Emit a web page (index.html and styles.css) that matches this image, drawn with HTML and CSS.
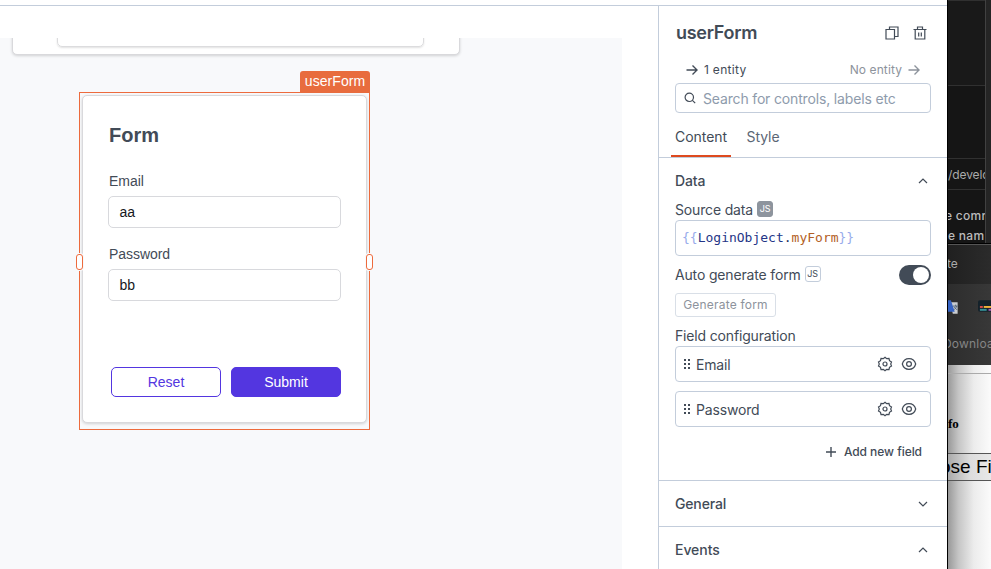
FILE: index.html
```html
<!DOCTYPE html>
<html lang="en">
<head>
<meta charset="utf-8">
<title>userForm</title>
<link rel="stylesheet" href="styles.css">
</head>
<body>
<svg class="defs" width="0" height="0">
  <symbol id="gear" viewBox="0 0 16 16"><path d="M8 1.200l1.700 1.500 2.300-.2.500 2.200 2 1.200L13.700 8l.8 2.100-2 1.200-.5 2.200-2.300-.2L8 14.800l-1.700-1.500-2.300.2-.5-2.200-2-1.200L2.300 8l-.8-2.100 2-1.200.5-2.200 2.300.2z"/><circle cx="8" cy="8" r="2"/></symbol>
  <symbol id="eye" viewBox="0 0 16 16"><path d="M1.300 8C2.200 4.800 4.900 2.700 8 2.700s5.800 2.100 6.700 5.300c-.9 3.200-3.600 5.300-6.700 5.300S2.200 11.200 1.300 8z"/><circle cx="8" cy="8" r="2.400"/></symbol>
  <symbol id="dots" viewBox="0 0 8 12"><path d="M1 1h2v2H1zM5 1h2v2H5zM1 5h2v2H1zM5 5h2v2H5zM1 9h2v2H1zM5 9h2v2H5z"/></symbol>
  <symbol id="arrow" viewBox="0 0 12 12"><path d="M.5 6h10.500M6.500 1.500L11 6l-4.500 4.500"/></symbol>
  <symbol id="up" viewBox="0 0 10 10"><path d="M1 7l4-4 4 4"/></symbol>
  <symbol id="down" viewBox="0 0 10 10"><path d="M1 3l4 4 4-4"/></symbol>
</svg>
<div class="screen">
  <div class="app">
    <div class="topbar"></div>
    <div class="workspace">
      <main class="editor">
        <div class="canvas">
          <div class="card prev"><div class="prev-inner"></div></div>
          <div class="selection">
            <span class="tag">userForm</span>
            <i class="handle left"></i><i class="handle right"></i>
            <form class="card form">
              <h1>Form</h1>
              <label>Email</label>
              <div class="input">aa</div>
              <label>Password</label>
              <div class="input">bb</div>
              <div class="buttons"><button type="button" class="reset">Reset</button><button type="button" class="submit">Submit</button></div>
            </form>
          </div>
        </div>
      </main>
      <aside class="panel">
        <header class="head">
          <h2>userForm</h2>
          <svg class="icon" width="14" height="14" viewBox="0 0 14 14"><path d="M4.500 3.500V1h8.500v9.500h-3M1 3.500h8.500V13H1z"/></svg>
          <svg class="icon" width="14" height="14" viewBox="0 0 14 14"><path d="M.5 3.500h13M4.500 3V1h5v2M2.200 3.500V13h9.600V3.500M5.700 6.500v4M8.300 6.500v4"/></svg>
        </header>
        <div class="entities">
          <span class="entity one"><svg class="icon bold" width="12" height="12"><use href="#arrow"/></svg>1 entity</span>
          <span class="entity none">No entity<svg class="icon bold" width="12" height="12"><use href="#arrow"/></svg></span>
        </div>
        <div class="search"><svg class="icon" width="12" height="12" viewBox="0 0 12 12"><circle cx="5.300" cy="5.300" r="4.200"/><path d="M8.400 8.400l2.800 2.800"/></svg>Search for controls, labels etc</div>
        <nav class="tabs"><span class="tab active">Content</span><span class="tab">Style</span></nav>
        <section class="data">
          <div class="section-title">Data<svg class="icon" width="10" height="10"><use href="#up"/></svg></div>
          <div class="prop first">Source data<span class="js on">JS</span></div>
          <div class="code"><span class="brace">{{</span><span class="obj">LoginObject</span>.<span class="attr">myForm</span><span class="brace">}}</span></div>
          <div class="prop auto">Auto generate form<span class="js">JS</span><span class="toggle"></span></div>
          <div class="generate">Generate form</div>
          <div class="prop fields">Field configuration</div>
          <div class="field"><svg class="dots" width="8" height="12"><use href="#dots"/></svg><span>Email</span><svg class="icon" width="16" height="16"><use href="#gear"/></svg><svg class="icon" width="16" height="16"><use href="#eye"/></svg></div>
          <div class="field"><svg class="dots" width="8" height="12"><use href="#dots"/></svg><span>Password</span><svg class="icon" width="16" height="16"><use href="#gear"/></svg><svg class="icon" width="16" height="16"><use href="#eye"/></svg></div>
          <div class="add"><svg class="icon bold" width="10" height="10" viewBox="0 0 10 10"><path d="M0 5h10M5 0v10"/></svg>Add new field</div>
        </section>
        <section class="collapsed">General<svg class="icon" width="10" height="10"><use href="#down"/></svg></section>
        <section class="collapsed">Events<svg class="icon" width="10" height="10"><use href="#up"/></svg></section>
      </aside>
    </div>
  </div>
  <div class="behind">
    <div class="terminal">
      <div class="pane">
        <div class="cell tall"></div>
        <div class="cell mid"></div>
        <div class="cell path">/develo</div>
        <div class="output"><p class="shifted">e comm</p><p>e nam</p></div>
      </div>
    </div>
    <div class="menu">te</div>
    <div class="bookmarks">
      <div class="favicons">
        <svg width="11" height="16" viewBox="0 0 11 16"><path fill="#c9ccd0" d="M2 2h8v12H5z"/><path fill="#3563c4" d="M0 0h3l4 12H0z"/><path stroke="#536477" fill="none" d="M5 6h5M8 4.500V6M9 6c-.5 2-1.500 3-2.500 3.500M6.500 7l3 3"/></svg>
        <svg width="14" height="12" viewBox="0 0 14 12"><path fill="#14222b" d="M2 0h12v12H2a2 2 0 0 1-2-2V2a2 2 0 0 1 2-2z"/><path fill="#dd4b4b" d="M2 6h3v2H2z"/><path fill="#eeb33c" d="M6 6h8v2H6z"/><path fill="#36939a" d="M2 9h7v2H2z"/><path fill="#a45bb5" d="M11 9h3v2h-3z"/></svg>
      </div>
      <div class="downloads">Downloa</div>
    </div>
    <div class="page">
      <div class="page-top"></div>
      <div class="info">fo</div>
      <div class="choose">ose Fi</div>
    </div>
  </div>
</div>
</body>
</html>
```

FILE: styles.css
```css
* { box-sizing: border-box; }
body { margin: 0; font-family: Inter, sans-serif; color: #424b57; }
h1, h2, p { margin: 0; }
.defs { display: none; }
.screen { display: grid; grid-template-columns: 947px 44px; height: 569px; overflow: hidden; }
.app { display: flex; flex-direction: column; min-width: 0; height: 569px; background: #fff; }
.topbar { height: 6px; flex: none; border-bottom: 1px solid #c3cddb; }
.workspace { display: flex; flex: 1; min-height: 0; }
.icon { fill: none; stroke: #424b57; stroke-width: 1.2; flex: none; overflow: visible; }
.icon.bold { stroke-width: 1.4; }

/* canvas */
.editor { width: 658px; padding: 32px 36px 0 0; }
.canvas { position: relative; height: 531px; background: #f8f9fb; overflow: hidden; font-family: "Liberation Sans", Arial, sans-serif; }
.card { background: #fff; border: 1px solid #d9d9dc; border-radius: 5px; box-shadow: 0 1px 3px rgba(0, 0, 0, .16); }
.prev { position: absolute; left: 12px; top: -40px; width: 448px; height: 57px; padding: 0 35px 8px 44px; }
.prev-inner { height: 48px; border: 1px solid #dcdcde; border-radius: 5px; box-shadow: 0 1px 2px rgba(0, 0, 0, .12); }
.selection { position: absolute; left: 79px; top: 54px; width: 291px; height: 338px; border: 1px solid #ed6b3d; padding: 2px; }
.tag { position: absolute; right: -1px; top: -22px; width: 70px; height: 22px; border-radius: 3px 3px 0 0; background: #e86c3e; color: #fff; font-size: 14px; line-height: 21px; text-align: center; letter-spacing: .05px; }
.handle { position: absolute; top: 161px; width: 7px; height: 16px; border: 1px solid #ed6b3d; border-radius: 3px; background: #fff; box-shadow: 0 0 0 1px #f8f9fb; }
.handle.left { left: -4px; }
.handle.right { right: -4px; }
.form { height: 328px; width: 285px; padding: 24px 25px 0; font-size: 14px; }
.form h1 { font-size: 20px; line-height: 30px; height: 51px; padding-left: 1px; }
.form label { display: block; height: 25px; line-height: 20px; padding-left: 1px; letter-spacing: -.05px; }
.input { height: 32px; border: 1px solid #d8d9dd; border-radius: 5px; padding: 0 11px 0 10.500px; line-height: 31px; color: #16181c; margin-bottom: 16px; letter-spacing: -.1px; }
.buttons { display: flex; justify-content: flex-end; gap: 10px; margin-top: 66px; }
.buttons button { width: 110px; height: 30px; border: 1px solid #5336e0; border-radius: 5px; padding: 0; font: 14px/28px "Liberation Sans", Arial, sans-serif; background: #fff; color: #5336e0; }
.buttons .submit { background: #5336e0; color: #fff; }

/* property panel */
.panel { width: 289px; border-left: 1px solid #c3cddb; font-size: 14px; letter-spacing: -.16px; overflow: hidden; white-space: nowrap; }
.head { display: flex; align-items: center; gap: 14px; height: 54px; padding: 0 20px 0 17px; }
.head h2 { flex: 1; font-size: 18px; font-weight: 600; line-height: 24px; letter-spacing: -.3px; }
.entities { display: flex; justify-content: space-between; height: 23px; padding: 0 27px; font-size: 12px; line-height: 20px; letter-spacing: .1px; }
.entity { display: flex; align-items: center; gap: 6px; height: 20px; }
.one { letter-spacing: .3px; }
.none { color: #8d939c; }
.none .icon { stroke: #8d939c; }
.search { display: flex; align-items: center; gap: 7px; height: 30px; margin: 0 16px; padding: 1px 9px 0 8px; border: 1px solid #c3cddb; border-radius: 4px; color: #8e9bac; }
.search .icon { margin-top: -2px; }
.tabs { display: flex; height: 45px; padding-left: 12px; gap: 12px; border-bottom: 1px solid #c3cddb; line-height: 48px; letter-spacing: -.05px; }
.tab { padding: 0 4px 0 3.500px; color: #5b6675; }
.tab.active { padding-left: 4px; color: #424b57; border-bottom: 2px solid #de4a1f; width: 60px; }
.data { height: 323px; padding: 10px 16px 0; border-bottom: 1px solid #c3cddb; }
.section-title { display: flex; align-items: center; justify-content: space-between; height: 24px; padding-right: 3px; font-weight: 500; letter-spacing: -.1px; }
.section-title .icon { margin-top: 2px; }
.prop { display: flex; align-items: center; height: 20px; gap: 4px; }
.first { height: 28px; padding-top: 6px; }
.js { width: 16px; height: 16px; border: 1px solid #c3cddb; border-radius: 3px; font-size: 9px; line-height: 14px; text-align: center; margin-top: -1px; }
.js.on { background: #8d949d; border-color: #8d949d; color: #fff; }
.code { height: 36px; border: 1px solid #c3cddb; border-radius: 4px; padding: 0 6px; font: 13px/34px "DejaVu Sans Mono", monospace; letter-spacing: 0; color: #243060; }
.brace { color: #98aceb; }
.obj { color: #243587; }
.attr { color: #b26025; }
.auto { margin-top: 9px; padding-bottom: 1px; }
.toggle { margin-left: auto; width: 32px; height: 20px; border-radius: 10px; background: #424b57; padding: 2px; display: flex; justify-content: flex-end; }
.toggle::before { content: ""; width: 16px; height: 16px; border-radius: 50%; background: #fff; }
.generate { width: 101px; height: 24px; margin-top: 8px; border: 1px solid #d9dfe7; border-radius: 3px; font-size: 12px; line-height: 22px; text-align: center; color: #8d939c; letter-spacing: .2px; }
.fields { margin-top: 8px; margin-bottom: 1px; }
.field { display: flex; align-items: center; gap: 8px; height: 36px; margin-bottom: 9px; padding: 0 13px 0 7px; border: 1px solid #c3cddb; border-radius: 4px; }
.field span { flex: 1; padding-top: 1px; margin-left: -3px; }
.dots { fill: #424b57; }
.add { display: flex; align-items: center; justify-content: flex-end; gap: 8px; height: 31px; padding-right: 9px; font-size: 12px; font-weight: 500; letter-spacing: -.05px; }
.collapsed { display: flex; align-items: center; justify-content: space-between; height: 46px; padding: 0 19px 0 16px; border-bottom: 1px solid #c3cddb; font-weight: 500; }
.collapsed + .collapsed { letter-spacing: -.05px; }

/* windows behind the app */
.behind { border-left: 1px solid #000; background: #fff; overflow: hidden; white-space: nowrap; }
.terminal { height: 244px; background: #252525; border-bottom: 1px solid #000; }
.pane { width: 38px; height: 243px; overflow: hidden; border-right: 1px solid #414141; background: #151515; color: #aaa; font-size: 12px; }
.cell { border-bottom: 1px solid #303030; }
.tall { height: 86px; border-top: 1px solid #303030; background: #191919; }
.mid { height: 73px; }
.path { height: 31px; line-height: 31px; letter-spacing: -.1px; }
.output { padding-top: 16px; font-weight: 500; line-height: 20px; color: #bbb; }
.output p { letter-spacing: .3px; }
.output .shifted { margin-left: -3px; }
.menu { height: 40px; border-top: 1px solid #555; background: linear-gradient(90deg, #202020, #2b2b2b); color: #aaa; font-size: 12px; line-height: 38px; text-indent: -1px; }
.bookmarks { height: 81px; background: linear-gradient(90deg, #2d2d2d, #383838); color: #858585; font-size: 12px; }
.favicons { display: flex; gap: 19px; height: 49px; padding-top: 16px; }
.downloads { margin-left: -5px; line-height: 22px; letter-spacing: .2px; }
.page { height: 204px; background: linear-gradient(90deg, #999, #c6c6c6 25%, #ececec 60%, #fbfbfb); color: #000; }
.page-top { height: 9px; border-bottom: 1px solid #aaa; }
.info { height: 79px; padding-top: 40px; font: bold 13px/20px "Liberation Serif", serif; }
.choose { height: 28px; border: solid #555; border-width: 1px 0; background: linear-gradient(90deg, #aaa, #dcdcdc 50%, #e8e8e8); font: 19px/26px "Liberation Sans", Arial, sans-serif; text-indent: -8px; overflow: hidden; }
```
